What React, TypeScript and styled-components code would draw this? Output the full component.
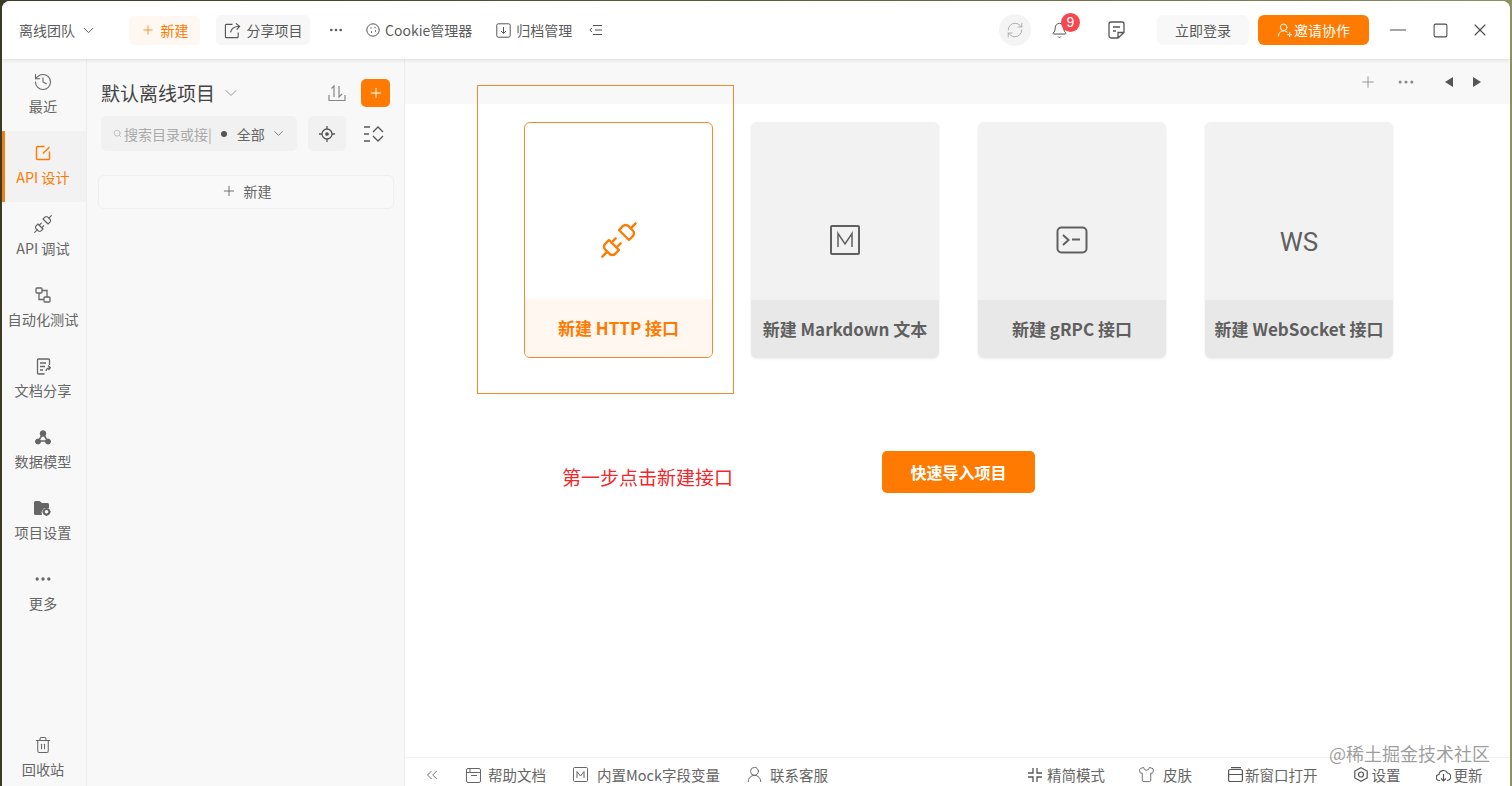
import React from "react";
import styled, { createGlobalStyle } from "styled-components";
import {
  Bell, ChevronDown, ChevronsLeft, Ellipsis, History, Minus, Plus, RefreshCw, Search,
  Shirt, Square, Trash2, Unplug, UserRound, UserRoundPlus, X,
} from "lucide-react";

const GlobalStyle = createGlobalStyle`
  html, body { margin: 0; height: 100%; overflow: hidden; }
  body {
    background: linear-gradient(90deg, #3b3a26 0%, #5c5b3c 50%, #8d9160 100%);
    font-family: "Noto Sans CJK SC", "Noto Sans", sans-serif;
    color: #595959;
  }
`;

const ORANGE = "#ff7a00";

const Window = styled.div`
  width: 1508px;
  height: 785px;
  margin: 1px 0 0 2px;
  border-radius: 8px 8px 0 0;
  overflow: hidden;
  background: #fff;
  display: flex;
  flex-direction: column;
  position: relative;
`;

const Header = styled.header`
  height: 58px;
  flex: none;
  display: flex;
  align-items: center;
  padding-left: 17px;
  background: #fff;
  box-shadow: 0 1px 4px rgba(0, 0, 0, 0.12);
  position: relative;
  z-index: 2;
  font-size: 14px;
`;

const HeaderItem = styled.div<{ $ml?: number }>`
  display: flex;
  align-items: center;
  gap: 5px;
  margin-left: ${(p) => p.$ml ?? 0}px;
  white-space: nowrap;
  color: #5c5c5c;
`;

const NewButton = styled.div`
  width: 71px;
  height: 29px;
  margin-left: 32px;
  display: flex;
  align-items: center;
  justify-content: center;
  gap: 6px;
  border-radius: 5px;
  background: #fff8f2;
  color: ${ORANGE};
`;

const ShareButton = styled.div`
  width: 94px;
  height: 30px;
  margin-left: 16px;
  display: flex;
  align-items: center;
  justify-content: center;
  gap: 6px;
  border-radius: 5px;
  background: #f7f7f7;
`;

const HeaderSpacer = styled.div`
  flex: 1;
`;

const SyncCircle = styled.div`
  width: 32px;
  height: 32px;
  border-radius: 50%;
  background: #f4f4f4;
  color: #a8a8a8;
  display: flex;
  align-items: center;
  justify-content: center;
`;

const BellWrap = styled.div`
  position: relative;
  display: flex;
  margin-left: 20px;
  color: #4f4f4f;
`;

const Badge = styled.span`
  position: absolute;
  left: 10px;
  top: -9px;
  width: 19px;
  height: 19px;
  border-radius: 50%;
  background: #f6474f;
  color: #fff;
  font: 14px/19px "Liberation Sans", sans-serif;
  text-align: center;
`;

const LoginButton = styled.div`
  width: 92px;
  height: 30px;
  margin-left: 32px;
  border-radius: 6px;
  background: #f8f8f8;
  text-align: center;
  line-height: 30px;
`;

const InviteButton = styled.div`
  width: 111px;
  height: 30px;
  margin-left: 9px;
  border-radius: 6px;
  background: ${ORANGE};
  color: #fff;
  display: flex;
  align-items: center;
  justify-content: center;
  gap: 1px;
`;

const WindowControls = styled.div`
  display: flex;
  align-items: center;
  gap: 21px;
  margin-left: 16px;
  margin-right: 20px;
  color: #4a4a4a;
`;

const Body = styled.div`
  flex: 1;
  min-height: 0;
  display: flex;
`;

const Sidebar = styled.nav`
  width: 85px;
  flex: none;
  padding-top: 1px;
  box-sizing: border-box;
  display: flex;
  flex-direction: column;
  background: #f8f8f8;
  border-right: 1px solid #eeeeee;
`;

const NavItem = styled.div<{ $active?: boolean }>`
  height: 71px;
  flex: none;
  box-sizing: border-box;
  display: flex;
  flex-direction: column;
  align-items: center;
  justify-content: center;
  gap: 3px;
  font-size: 14.2px;
  line-height: 20px;
  white-space: nowrap;
  color: ${(p) => (p.$active ? ORANGE : "#666")};
  background: ${(p) => (p.$active ? "#f2f2f2" : "transparent")};
  border-left: 3px solid ${(p) => (p.$active ? "#f07f14" : "transparent")};
  padding: 0 5px 4px 0;
`;

const NavBottom = styled(NavItem)`
  margin-top: auto;
  height: 66px;
  padding: 7px 5px 0 0;
`;

const IconSlot = styled.span`
  height: 22px;
  display: flex;
  align-items: center;
  justify-content: center;
`;

const Panel = styled.aside`
  width: 318px;
  flex: none;
  box-sizing: border-box;
  padding: 19px 14px 0 12px;
  background: #f8f8f8;
  border-right: 1px solid #ececec;
`;

const PanelTitleRow = styled.div`
  display: flex;
  align-items: center;
  height: 29px;
  padding-left: 2px;
`;

const PanelTitle = styled.div`
  font-size: 19px;
  color: #444;
  white-space: nowrap;
`;

const ChevronWrap = styled.span`
  display: flex;
  margin-left: 6px;
  color: #999;
`;

const ImportIcon = styled.span`
  margin-left: auto;
  display: flex;
  color: #888;
`;

const AddButton = styled.div`
  width: 29px;
  height: 28px;
  margin-left: 15px;
  border-radius: 5px;
  background: ${ORANGE};
  color: #fff;
  display: flex;
  align-items: center;
  justify-content: center;
`;

const SearchRow = styled.div`
  display: flex;
  align-items: center;
  margin-top: 9px;
  padding-left: 2px;
`;

const SearchBox = styled.div`
  width: 196px;
  height: 35px;
  box-sizing: border-box;
  padding-left: 12px;
  display: flex;
  align-items: center;
  border-radius: 5px;
  background: #f1f1f1;
  font-size: 14px;
  color: #aaa;
`;

const SearchText = styled.span`
  margin-left: 2px;
  white-space: nowrap;
`;

const Dot = styled.span`
  width: 6px;
  height: 6px;
  margin-left: 9px;
  border-radius: 50%;
  background: #555;
  flex: none;
`;

const ScopeLabel = styled.span`
  margin: 0 6px 0 10px;
  color: #666;
  white-space: nowrap;
`;

const LocateButton = styled.div`
  width: 38px;
  height: 35px;
  margin-left: 11px;
  border-radius: 5px;
  background: #f1f1f1;
  display: flex;
  align-items: center;
  justify-content: center;
`;

const ToggleIcon = styled.span`
  display: flex;
  margin-left: 17px;
`;

const NewRow = styled.div`
  height: 34px;
  margin-top: 24px;
  margin-left: -1px;
  width: 296px;
  box-sizing: border-box;
  display: flex;
  align-items: center;
  justify-content: center;
  gap: 7px;
  padding-bottom: 2px;
  border: 1px solid #efefef;
  border-radius: 6px;
  font-size: 14px;
  color: #666;
  background: #f9f9f9;
`;

const Main = styled.main`
  flex: 1;
  min-width: 0;
  display: flex;
  flex-direction: column;
  position: relative;
`;

const TabStrip = styled.div`
  height: 45px;
  flex: none;
  background: #f8f8f8;
  display: flex;
  align-items: center;
  justify-content: flex-end;
  padding-right: 29px;
  color: #8c8c8c;
`;

const TabActions = styled.div`
  display: flex;
  align-items: center;
  gap: 19px;
`;

const Arrow = styled.span<{ $dir: "left" | "right" }>`
  width: 0;
  height: 0;
  border-top: 5px solid transparent;
  border-bottom: 5px solid transparent;
  ${(p) => (p.$dir === "left" ? "border-right: 8px solid #555; margin-left: 10px;" : "border-left: 8px solid #555; margin-left: 1px;")}
`;

const Content = styled.div`
  flex: 1;
  min-height: 0;
  padding-top: 18px;
  display: flex;
  flex-direction: column;
`;

const CardRow = styled.div`
  display: flex;
  gap: 39px;
  padding-left: 119px;
`;

const Card = styled.div<{ $active?: boolean }>`
  width: ${(p) => (p.$active ? 189 : 188)}px;
  height: 236px;
  margin-right: ${(p) => (p.$active ? -1 : 0)}px;
  box-sizing: border-box;
  border-radius: 6px;
  overflow: hidden;
  display: flex;
  flex-direction: column;
  background: ${(p) => (p.$active ? "#fff" : "#f2f2f2")};
  border: ${(p) => (p.$active ? `1px solid #f28a2c` : "none")};
  box-shadow: ${(p) => (p.$active ? "none" : "0 1px 3px rgba(0, 0, 0, 0.08)")};
  color: ${(p) => (p.$active ? ORANGE : "#5f5f5f")};
`;

const CardIcon = styled.div`
  flex: 1;
  padding-top: 58px;
  display: flex;
  align-items: center;
  justify-content: center;
`;

const WsLabel = styled.span`
  font-size: 26px;
  line-height: 30px;
  margin-top: 3px;
  color: #606060;
  font-family: Roboto, sans-serif;
`;

const CardFoot = styled.div<{ $active?: boolean }>`
  height: 58px;
  flex: none;
  display: flex;
  align-items: center;
  justify-content: center;
  padding-bottom: 2px;
  box-sizing: border-box;
  background: ${(p) => (p.$active ? "#fff7f0" : "#e8e8e8")};
  font-size: 17px;
  font-weight: 700;
  white-space: nowrap;
`;

const ImportButton = styled.div`
  align-self: center;
  width: 153px;
  height: 42px;
  margin: 93px 0 0 2px;
  border-radius: 5px;
  background: ${ORANGE};
  color: #fff;
  font-size: 16px;
  font-weight: 700;
  line-height: 42px;
  text-align: center;
`;

const StepBox = styled.div`
  position: absolute;
  left: 72px;
  top: 26px;
  width: 255px;
  height: 307px;
  border: 1px solid #f28a2c;
  pointer-events: none;
`;

const StepNote = styled.div`
  position: absolute;
  left: 157px;
  top: 404px;
  font-size: 19px;
  line-height: 28px;
  color: #f0282d;
  white-space: nowrap;
`;

const Watermark = styled.div`
  position: absolute;
  right: 20px;
  bottom: 24px;
  font-size: 18px;
  line-height: 18px;
  color: rgba(120, 120, 120, 0.72);
  white-space: nowrap;
`;

const StatusBar = styled.footer`
  height: 29px;
  flex: none;
  box-sizing: border-box;
  border-top: 1px solid #f0f0f0;
  display: flex;
  align-items: center;
  padding: 5px 0 0 18px;
  font-size: 14.5px;
  color: #666;
  background: #fff;
`;

const StatusItem = styled.div<{ $ml: number; $gap?: number }>`
  display: flex;
  align-items: center;
  gap: ${(p) => p.$gap ?? 8}px;
  margin-left: ${(p) => p.$ml}px;
  white-space: nowrap;
`;

const MBox = () => (
  <svg width="32" height="32" viewBox="0 0 32 32" fill="none" stroke="#606060">
    <rect x="2" y="2" width="28" height="28" rx="1" strokeWidth="2" />
    <path d="M9 23V9.500L16 20l7-10.500V23" strokeWidth="1.500" />
  </svg>
);

const SmallM = () => (
  <svg width="15" height="15" viewBox="0 0 15 15" fill="none" stroke="#666">
    <rect x=".5" y=".5" width="14" height="14" rx="1" />
    <path d="M4 11V4.500L7.500 9 11 4.500V11" />
  </svg>
);

const TerminalBox = () => (
  <svg width="32" height="28" viewBox="0 0 32 28" fill="none" stroke="#606060" strokeWidth="2">
    <rect x="1.500" y="1.500" width="29" height="25" rx="4" />
    <path d="m7 9 5.500 5L7 19M16 13.500h8" />
  </svg>
);

const CookieIcon = () => (
  <svg width="14" height="14" viewBox="0 0 14 14" fill="none" stroke="#555">
    <circle cx="7" cy="7" r="6.200" />
    <path d="M4.500 5h1M8.500 4.500h1M5 9h1M9 8h1" strokeWidth="1.300" />
  </svg>
);

const ArchiveIcon = () => (
  <svg width="15" height="15" viewBox="0 0 15 15" fill="none" stroke="#555">
    <rect x=".8" y=".8" width="13.400" height="13.400" rx="1.500" />
    <path d="M7.500 4v6M5 8l2.500 2.500L10 8" />
  </svg>
);

const ListCollapse = () => (
  <svg width="13" height="12" viewBox="0 0 13 12" fill="none" stroke="#555">
    <path d="M4 1.500h9M6 6h7M4 10.500h9M3 4 .8 6 3 8" />
  </svg>
);

const ShareIcon = () => (
  <svg width="17" height="17" viewBox="0 0 18 18" fill="none" stroke="#555" strokeWidth="1.200">
    <path d="M9 2.500H2.500a1 1 0 0 0-1 1V15.500a1 1 0 0 0 1 1H14a1 1 0 0 0 1-1V11" />
    <path d="M7 11c.5-4 3-6 9-6.500M12.500 1.500 16.500 4.500 13.500 8" />
  </svg>
);

const NoteIcon = () => (
  <svg width="17" height="18" viewBox="0 0 17 18" fill="none" stroke="#555" strokeWidth="1.300">
    <path d="M10 17H3a2 2 0 0 1-2-2V3a2 2 0 0 1 2-2h11a2 2 0 0 1 2 2v8.500L10 17ZM10 17v-5.500h6M5 6h7M5 10h3" />
  </svg>
);

const ImportExportIcon = () => (
  <svg width="18" height="18" viewBox="0 0 18 18" fill="none" stroke="#888" strokeWidth="1.200">
    <path d="M1 11v5.500h16V11M6 13V2L3.500 4.500M11 2v11l3-3" />
  </svg>
);

const TargetIcon = () => (
  <svg width="16" height="16" viewBox="0 0 16 16" fill="none" stroke="#555" strokeWidth="1.300">
    <circle cx="8" cy="8" r="5" />
    <circle cx="8" cy="8" r="1.200" fill="#555" />
    <path d="M8 0v3M8 13v3M0 8h3M13 8h3" />
  </svg>
);

const ExpandIcon = () => (
  <svg width="21" height="18" viewBox="0 0 21 18" fill="none" stroke="#555" strokeWidth="1.300">
    <path d="M1 2h6M1 9h5M1 16h6M10 7l5-5 5 5M10 11l5 5 5-5" />
  </svg>
);

const PenBoxIcon = () => (
  <svg width="16" height="16" viewBox="0 0 16 16" fill="none" stroke={ORANGE} strokeWidth="1.400">
    <path d="M9.500 1.500H2.500a1 1 0 0 0-1 1v11a1 1 0 0 0 1 1h11a1 1 0 0 0 1-1V6.500" />
    <path d="m8 8.500 6.500-6.500" />
  </svg>
);

const FlowIcon = () => (
  <svg width="16" height="16" viewBox="0 0 16 16" fill="none" stroke="#666" strokeWidth="1.300">
    <rect x="1" y="1" width="6" height="5" rx="1" />
    <rect x="9" y="10" width="6" height="5" rx="1" />
    <path d="M4 6v6.500h5M7 3.500h5V10" />
  </svg>
);

const DocIcon = () => (
  <svg width="15" height="17" viewBox="0 0 15 17" fill="none" stroke="#666" strokeWidth="1.300">
    <path d="M13.500 7V2a1 1 0 0 0-1-1h-10a1 1 0 0 0-1 1v13a1 1 0 0 0 1 1h6M4 5h6M4 8.500h5M4 12h3M10 13c.3-2 1.500-3 4-3.300M12 7.500l2.300 2L12.500 12" />
  </svg>
);

const ModelIcon = () => (
  <svg width="16" height="15" viewBox="0 0 16 15" fill="#666" stroke="#666">
    <circle cx="8" cy="3.500" r="2.800" />
    <circle cx="3" cy="11.500" r="2.500" />
    <circle cx="13" cy="11.500" r="2.500" />
    <path d="M7 5 3.500 11h9L9 5" fill="none" strokeWidth="1.500" />
  </svg>
);

const FolderGearIcon = () => (
  <svg width="18" height="15" viewBox="0 0 18 15">
    <path d="M0 1.500A1.500 1.500 0 0 1 1.500 0h4L8 2h5.500A1.500 1.500 0 0 1 15 3.500V7H10L7.500 11 8 14H1.500A1.500 1.500 0 0 1 0 12.500Z" fill="#666" />
    <circle cx="12.500" cy="10.800" r="2.800" fill="none" stroke="#666" strokeWidth="2" />
    <path d="M12.500 6.500v1.500M12.500 13.500V15M8.500 10.800H10M15 10.800h1.500" stroke="#666" strokeWidth="1.500" />
  </svg>
);

const HelpIcon = () => (
  <svg width="15" height="16" viewBox="0 0 15 16" fill="none" stroke="#666">
    <rect x=".5" y="1.500" width="14" height="14" rx="1.500" />
    <path d="M.5 5.500h14M4 1.500v4M5 8.500h6" />
  </svg>
);

const CompactIcon = () => (
  <svg width="14" height="14" viewBox="0 0 14 14" fill="none" stroke="#555" strokeWidth="1.300">
    <path d="M5 0v5H0M9 0v5h5M0 9h5v5M14 9H9v5" />
  </svg>
);

const WindowIcon = () => (
  <svg width="15" height="15" viewBox="0 0 15 15" fill="none" stroke="#555" strokeWidth="1.200">
    <rect x=".6" y="2.500" width="13.800" height="12" rx="1.500" />
    <path d="M.6 7.500h13.800M3 .6h10" />
  </svg>
);

const GearIcon = () => (
  <svg width="14" height="15" viewBox="0 0 14 15" fill="none" stroke="#555" strokeWidth="1.200">
    <path d="M7 .8 13.200 4v7L7 14.200.8 11V4Z" />
    <circle cx="7" cy="7.500" r="2.500" />
  </svg>
);

const UpdateIcon = () => (
  <svg width="15" height="14" viewBox="0 0 15 14" fill="none" stroke="#555" strokeWidth="1.200">
    <path d="M4 12.500H3.500a3 3 0 0 1-.5-6A4.500 4.500 0 0 1 11.500 5a3.800 3.800 0 0 1 0 7.500H11" />
    <path d="M7.500 6v7M5 10.500 7.500 13 10 10.500" />
  </svg>
);

const navItems: { label: string; icon: React.ReactNode; active?: boolean }[] = [
  { label: "最近", icon: <History size={20} strokeWidth={1.3} /> },
  { label: "API 设计", icon: <PenBoxIcon />, active: true },
  { label: "API 调试", icon: <Unplug size={20} strokeWidth={1.4} /> },
  { label: "自动化测试", icon: <FlowIcon /> },
  { label: "文档分享", icon: <DocIcon /> },
  { label: "数据模型", icon: <ModelIcon /> },
  { label: "项目设置", icon: <FolderGearIcon /> },
  { label: "更多", icon: <Ellipsis size={20} strokeWidth={2} /> },
];

const cards: { label: string; icon: React.ReactNode; active?: boolean }[] = [
  { label: "新建 HTTP 接口", icon: <Unplug size={40} strokeWidth={1.4} color={ORANGE} />, active: true },
  { label: "新建 Markdown 文本", icon: <MBox /> },
  { label: "新建 gRPC 接口", icon: <TerminalBox /> },
  { label: "新建 WebSocket 接口", icon: <WsLabel>WS</WsLabel> },
];

export default function App() {
  return (
    <Window>
      <GlobalStyle />
      <Header>
        <HeaderItem>
          离线团队
          <ChevronDown size={17} strokeWidth={1.4} />
        </HeaderItem>
        <NewButton>
          <Plus size={14} strokeWidth={1.4} />
          新建
        </NewButton>
        <ShareButton>
          <ShareIcon />
          分享项目
        </ShareButton>
        <HeaderItem $ml={18}>
          <Ellipsis size={16} />
        </HeaderItem>
        <HeaderItem $ml={22}>
          <CookieIcon />
          Cookie管理器
        </HeaderItem>
        <HeaderItem $ml={24}>
          <ArchiveIcon />
          归档管理
        </HeaderItem>
        <HeaderItem $ml={17}>
          <ListCollapse />
        </HeaderItem>
        <HeaderSpacer />
        <SyncCircle>
          <RefreshCw size={18} strokeWidth={1.2} />
        </SyncCircle>
        <BellWrap>
          <Bell size={17} strokeWidth={1.4} />
          <Badge>9</Badge>
        </BellWrap>
        <HeaderItem $ml={40}>
          <NoteIcon />
        </HeaderItem>
        <LoginButton>立即登录</LoginButton>
        <InviteButton>
          <UserRoundPlus size={16} strokeWidth={1.5} />
          邀请协作
        </InviteButton>
        <WindowControls>
          <Minus size={26} strokeWidth={1.1} />
          <Square size={17} strokeWidth={1.5} />
          <X size={20} strokeWidth={1.3} />
        </WindowControls>
      </Header>
      <Body>
        <Sidebar>
          {navItems.map((item) => (
            <NavItem key={item.label} $active={item.active}>
              <IconSlot>{item.icon}</IconSlot>
              {item.label}
            </NavItem>
          ))}
          <NavBottom>
            <IconSlot>
              <Trash2 size={18} strokeWidth={1.4} />
            </IconSlot>
            回收站
          </NavBottom>
        </Sidebar>
        <Panel>
          <PanelTitleRow>
            <PanelTitle>默认离线项目</PanelTitle>
            <ChevronWrap>
              <ChevronDown size={20} strokeWidth={1.2} />
            </ChevronWrap>
            <ImportIcon>
              <ImportExportIcon />
            </ImportIcon>
            <AddButton>
              <Plus size={16} strokeWidth={1.5} />
            </AddButton>
          </PanelTitleRow>
          <SearchRow>
            <SearchBox>
              <Search size={9} strokeWidth={1.6} />
              <SearchText>搜索目录或接|</SearchText>
              <Dot />
              <ScopeLabel>全部</ScopeLabel>
              <ChevronDown size={15} strokeWidth={1.3} color="#666" />
            </SearchBox>
            <LocateButton>
              <TargetIcon />
            </LocateButton>
            <ToggleIcon>
              <ExpandIcon />
            </ToggleIcon>
          </SearchRow>
          <NewRow>
            <Plus size={16} strokeWidth={1.4} />
            新建
          </NewRow>
        </Panel>
        <Main>
          <TabStrip>
            <TabActions>
              <Plus size={18} strokeWidth={1.2} />
              <Ellipsis size={20} strokeWidth={1.8} />
              <Arrow $dir="left" />
              <Arrow $dir="right" />
            </TabActions>
          </TabStrip>
          <Content>
            <CardRow>
              {cards.map((card) => (
                <Card key={card.label} $active={card.active}>
                  <CardIcon>{card.icon}</CardIcon>
                  <CardFoot $active={card.active}>{card.label}</CardFoot>
                </Card>
              ))}
            </CardRow>
            <ImportButton>快速导入项目</ImportButton>
          </Content>
          <StepBox />
          <StepNote>第一步点击新建接口</StepNote>
          <Watermark>@稀土掘金技术社区</Watermark>
          <StatusBar>
            <ChevronsLeft size={18} strokeWidth={1.2} />
            <StatusItem $ml={25} $gap={7}>
              <HelpIcon />
              帮助文档
            </StatusItem>
            <StatusItem $ml={27} $gap={9}>
              <SmallM />
              内置Mock字段变量
            </StatusItem>
            <StatusItem $ml={25} $gap={6}>
              <UserRound size={19} strokeWidth={1.2} />
              联系客服
            </StatusItem>
            <StatusItem $ml={200} $gap={5}>
              <CompactIcon />
              精简模式
            </StatusItem>
            <StatusItem $ml={33}>
              <Shirt size={17} strokeWidth={1.3} />
              皮肤
            </StatusItem>
            <StatusItem $ml={36} $gap={2}>
              <WindowIcon />
              新窗口打开
            </StatusItem>
            <StatusItem $ml={37} $gap={3}>
              <GearIcon />
              设置
            </StatusItem>
            <StatusItem $ml={36} $gap={2}>
              <UpdateIcon />
              更新
            </StatusItem>
          </StatusBar>
        </Main>
      </Body>
    </Window>
  );
}
